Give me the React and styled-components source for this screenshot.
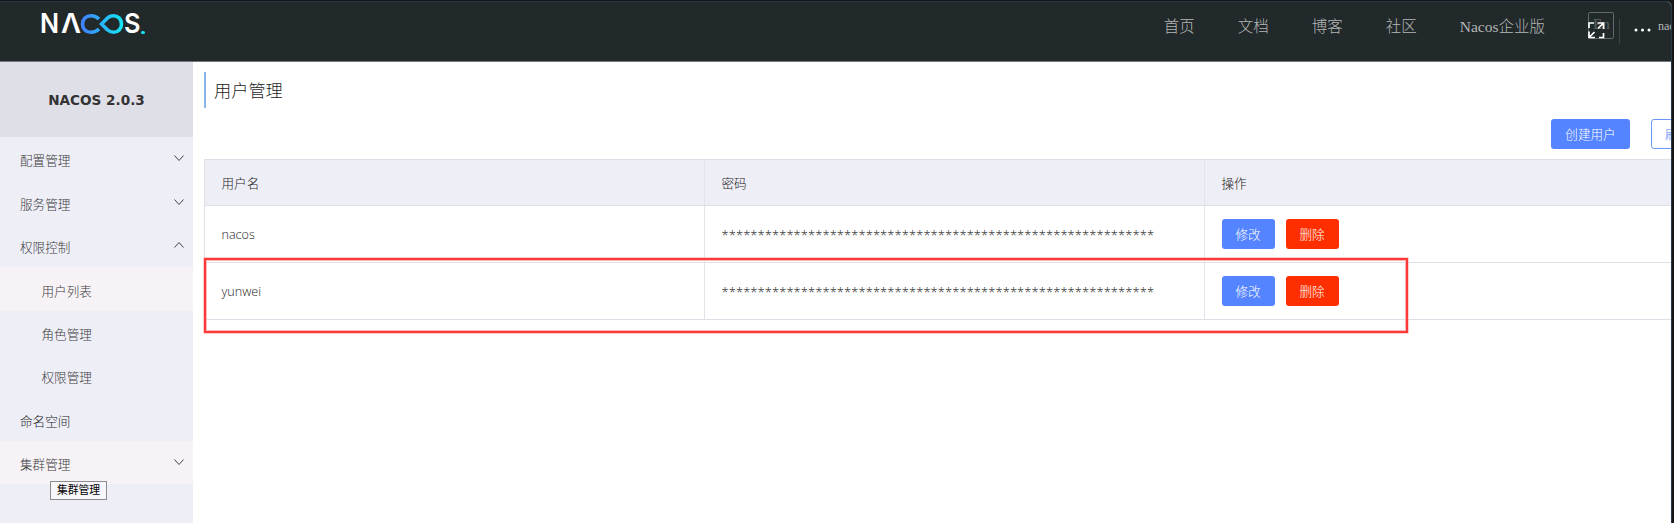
import React from "react";
import styled, { createGlobalStyle, css } from "styled-components";

const Global = createGlobalStyle`
  * { box-sizing: border-box; }
  body { margin: 0; background: #111514; overflow: hidden; }
`;

const sans = `"Open Sans", "Noto Sans CJK SC", sans-serif`;

const Screen = styled.div`
  width: 1674px;
  height: 523px;
  padding: 1px 2px 0 0;
  background: #111514;
  overflow: hidden;
  font-family: ${sans};
  font-weight: 300;
  font-size: 12.6px;
  color: #1c1c1c;
`;

const Window = styled.div`
  position: relative;
  height: 522px;
  border: solid #26384a;
  border-width: 1px 1px 0 0;
  border-top-right-radius: 5px;
  background: #fff;
  overflow: hidden;
`;

const Header = styled.header`
  display: flex;
  justify-content: space-between;
  height: 60px;
  background: #22292b;
  border-bottom: 1px solid #77777d;
`;

const Logo = styled.div`
  display: flex;
  height: 22px;
  margin: 11px 0 0 40px;
  color: #fff;
  font: 600 27px/22px Inter, sans-serif;
`;

const LogoLetter = styled.span`
  flex: none;
  width: ${(p) => p.$w}px;
  transform: scaleX(${(p) => p.$scale || 1});
  transform-origin: left;
`;

const Infinity = styled.svg`
  width: 44px;
  height: 22px;
  flex: none;
`;

const LogoDot = styled.i`
  align-self: flex-end;
  width: 3.5px;
  height: 3.5px;
  margin: 0 0 1px 1px;
  border-radius: 50%;
  background: #16dcf0;
`;

const Nav = styled.nav`
  display: flex;
  height: 46px;
  align-items: center;
  color: #b4b6b6;
  font: 300 15.5px "Liberation Serif", "Noto Sans CJK SC", serif;
`;

const NavLink = styled.a`
  margin-right: 43px;
  white-space: nowrap;
`;

const Tools = styled.div`
  display: flex;
  width: 83px;
  height: 48px;
  align-items: center;
  overflow: hidden;
`;

const Lang = styled.div`
  position: relative;
  flex: none;
  width: 26px;
  height: 27px;
  padding-left: 4px;
  border: 1px solid #626869;
  border-radius: 2px;
  color: #5b6162;
  font-size: 15px;
  line-height: 23px;
`;

const ExpandIcon = styled.svg`
  position: absolute;
  left: -1px;
  top: 9px;
`;

const Divider = styled.i`
  flex: none;
  width: 1px;
  height: 25px;
  margin: 12px 14px 0 5px;
  background: #3b4344;
`;

const Dots = styled.svg`
  flex: none;
  margin: 10px 7px 0 0;
`;

const Account = styled.span`
  margin-top: 2px;
  font-size: 12px;
`;

const Body = styled.div`
  display: flex;
  height: 461px;
`;

const Sidebar = styled.aside`
  flex: none;
  width: 193px;
  background: #eeeef7;
`;

const Version = styled.div`
  height: 75.3px;
  background: #dfdfe8;
  color: #333;
  text-align: center;
  font: 700 13.6px/77px "DejaVu Sans", sans-serif;
`;

const MenuItem = styled.div`
  position: relative;
  display: flex;
  align-items: center;
  justify-content: space-between;
  height: 43.4px;
  padding: 2px 8px 0 ${(p) => (p.$sub ? 41.5 : 20)}px;
  color: ${(p) => (p.$dark ? "#1c1c1c" : "#3c3c3c")};
  background: ${(p) => (p.$active ? "#f6f2f6" : "transparent")};
`;

const Arrow = styled.svg`
  margin-top: -3px;
`;

const Tooltip = styled.div`
  position: absolute;
  left: 50px;
  top: 39.5px;
  width: 57px;
  height: 19.5px;
  border: 1px solid #8c8c90;
  background: #f7f6fa;
  color: #000;
  font-size: 10.8px;
  font-weight: 400;
  line-height: 16px;
  text-align: center;
  z-index: 1;
`;

const Content = styled.main`
  flex: 1;
  min-width: 0;
  padding: 10px 0 0 11px;
`;

const Title = styled.h1`
  height: 36px;
  margin: 0;
  padding-left: 8px;
  border-left: 2px solid #8cb4ec;
  font-size: 17.2px;
  font-weight: 300;
  line-height: 37px;
`;

const Actions = styled.div`
  display: flex;
  justify-content: flex-end;
  gap: 21px;
  height: 51px;
  margin-right: -33px;
  padding-top: 10.5px;
`;

const tones = {
  primary: css`background: #5484ff; color: #fff;`,
  danger: css`background: #ff2e00; color: #fff;`,
  outline: css`background: #fff; color: #5484ff; border: 1px solid #6c98fc;`,
};

const Button = styled.button`
  width: ${(p) => p.$w || 53}px;
  height: 30.5px;
  padding: 0 0 1px;
  border: 0;
  border-radius: 3px;
  font: inherit;
  ${(p) => tones[p.$tone]}
`;

const Table = styled.div`
  border: solid #dfdfe8;
  border-width: 1px 0 0 1px;
`;

const Row = styled.div`
  display: grid;
  grid-template-columns: 500px 500px 1fr;
  height: ${(p) => (p.$head ? 46 : 57)}px;
  background: ${(p) => (p.$head ? "#eeeef7" : "#fff")};
  border-bottom: 1px solid #dfdfe8;
`;

const Cell = styled.div`
  display: flex;
  align-items: center;
  gap: 11px;
  padding-left: 16.5px;
  border-right: 1px solid #e3e3ea;
  &:last-child { border-right: 0; }
`;

const Password = styled.span`
  padding-top: 1px;
  font-size: 13px;
  letter-spacing: 0.05px;
`;

const Highlight = styled.div`
  position: absolute;
  left: 204px;
  top: 256px;
  width: 1204px;
  height: 75px;
  border: 2px solid #ff3838;
  box-shadow: 0 0 0 0.5px #ff9c9c, inset 0 0 0 1px #ffb8b8;
`;

const Chevron = ({ up }) => (
  <Arrow width="12" height="8" viewBox="0 0 12 8" fill="none" stroke="#444" strokeWidth="1">
    <path d={up ? "M1.5 6.5L6 1.5L10.5 6.5" : "M1.5 1.5L6 6.5L10.5 1.5"} />
  </Arrow>
);

const menu = [
  { label: "配置管理", arrow: "down" },
  { label: "服务管理", arrow: "down" },
  { label: "权限控制", arrow: "up" },
  { label: "用户列表", sub: true, active: true },
  { label: "角色管理", sub: true },
  { label: "权限管理", sub: true },
  { label: "命名空间", dark: true },
  { label: "集群管理", arrow: "down", active: true, tip: "集群管理" },
];

export default function App() {
  return (
    <Screen>
      <Global />
      <Window>
        <Header>
          <Logo>
            <LogoLetter $w={20.5} $scale={0.93}>N</LogoLetter>
            <LogoLetter $w={19.5} $scale={1.02}>Λ</LogoLetter>
            <Infinity viewBox="0 0 44 22">
              <defs>
                <linearGradient id="wave" x1="0" x2="1">
                  <stop offset="0" stopColor="#3f83ff" />
                  <stop offset="1" stopColor="#16e4f4" />
                </linearGradient>
              </defs>
              <path
                d="M19 6C16.500 3.500 14 2.700 11 2.700C6 2.700 2.500 6.300 2.500 11S6 19.300 11 19.300C14 19.300 16.500 18.300 19 16M21.500 11L27 5.500C29 3.500 31 2.700 33.500 2.700C38 2.700 41.500 6.300 41.500 11S38 19.300 33.500 19.300C31 19.300 29 18.300 27 16.500Z"
                fill="none" stroke="url(#wave)" strokeWidth="3.600"
              />
            </Infinity>
            <LogoLetter $w={16} $scale={0.94}>S</LogoLetter>
            <LogoDot />
          </Logo>
          <Nav>
            {["首页", "文档", "博客", "社区"].map((t) => <NavLink key={t}>{t}</NavLink>)}
            <NavLink>Nacos企业版</NavLink>
            <Tools>
              <Lang>
                En
                <ExpandIcon width="17" height="17" viewBox="0 0 17 17" fill="none" stroke="#fff" strokeWidth="1.7">
                  <path d="M1 6V1H6M9.500 1H15.500V7M15.500 11V15.500H11M7 15.500H1V9.500M15 1.500L10 6.500M1.500 15L6.500 10" />
                </ExpandIcon>
              </Lang>
              <Divider />
              <Dots width="17" height="4" viewBox="0 0 17 4" fill="#fff">
                <circle cx="2" cy="2" r="1.500" /><circle cx="8.500" cy="2" r="1.500" /><circle cx="15" cy="2" r="1.500" />
              </Dots>
              <Account>nacos</Account>
            </Tools>
          </Nav>
        </Header>
        <Body>
          <Sidebar>
            <Version>NACOS 2.0.3</Version>
            {menu.map((m) => (
              <MenuItem key={m.label} $sub={m.sub} $active={m.active} $dark={m.dark}>
                {m.label}
                {m.arrow && <Chevron up={m.arrow === "up"} />}
                {m.tip && <Tooltip>{m.tip}</Tooltip>}
              </MenuItem>
            ))}
          </Sidebar>
          <Content>
            <Title>用户管理</Title>
            <Actions>
              <Button $tone="primary" $w={79}>创建用户</Button>
              <Button $tone="outline" $w={53}>刷新</Button>
            </Actions>
            <Table>
              <Row $head><Cell>用户名</Cell><Cell>密码</Cell><Cell>操作</Cell></Row>
              {["nacos", "yunwei"].map((name) => (
                <Row key={name}>
                  <Cell>{name}</Cell>
                  <Cell><Password>{"*".repeat(60)}</Password></Cell>
                  <Cell><Button $tone="primary">修改</Button><Button $tone="danger">删除</Button></Cell>
                </Row>
              ))}
            </Table>
          </Content>
        </Body>
        <Highlight />
      </Window>
    </Screen>
  );
}
